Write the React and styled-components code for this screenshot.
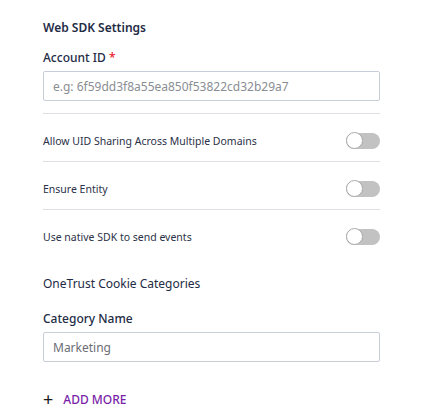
import React, { useState } from 'react'
import styled, { createGlobalStyle } from 'styled-components'

const GlobalStyle = createGlobalStyle`
  body {
    margin: 0;
    background: #ffffff;
    font-family: "Noto Sans", "Open Sans", sans-serif;
    color: #232b45;
  }
`

const toggles = [
  { id: 'uid', label: 'Allow UID Sharing Across Multiple Domains' },
  { id: 'entity', label: 'Ensure Entity' },
  { id: 'native', label: 'Use native SDK to send events' },
]

function App() {
  const [on, setOn] = useState({})
  const [accountId, setAccountId] = useState('')
  const [category, setCategory] = useState('Marketing')

  return (
    <Wrap>
      <GlobalStyle />
      <Title>Web SDK Settings</Title>

      <Label $top={10}>
        Account ID <Required>*</Required>
      </Label>
      <Input
        placeholder="e.g: 6f59dd3f8a55ea850f53822cd32b29a7"
        value={accountId}
        onChange={(e) => setAccountId(e.target.value)}
      />

      <Toggles>
        {toggles.map((t) => (
          <ToggleRow key={t.id}>
            <RowLabel>{t.label}</RowLabel>
            <Switch
              $on={!!on[t.id]}
              onClick={() => setOn({ ...on, [t.id]: !on[t.id] })}
            />
          </ToggleRow>
        ))}
      </Toggles>

      <SubTitle>OneTrust Cookie Categories</SubTitle>

      <Label $top={15}>Category Name</Label>
      <Input value={category} onChange={(e) => setCategory(e.target.value)} />

      <AddMore>
        <Plus>+</Plus>
        ADD MORE
      </AddMore>
    </Wrap>
  )
}

const Wrap = styled.div`
  width: 337px;
  padding: 18px 0 0 43px;
  display: flex;
  flex-direction: column;
`
const Title = styled.div`
  font-size: 12px;
  font-weight: 600;
  line-height: 20px;
`
const Label = styled.div`
  margin-top: ${(p) => p.$top}px;
  margin-bottom: 3px;
  font-size: 12px;
  font-weight: 500;
  line-height: 20px;
`
const Required = styled.span`
  color: #e8202a;
`
const Input = styled.input`
  box-sizing: border-box;
  width: 100%;
  height: 30px;
  padding: 0 9px;
  border: 1px solid #c8ced8;
  border-radius: 2px;
  font-family: "Noto Sans", sans-serif;
  font-size: 12px;
  color: #6b6e75;
  outline: none;
  &::placeholder {
    color: #8a8d93;
  }
`
const Toggles = styled.div`
  margin-top: 12px;
  border-top: 1px solid #dcdfe4;
`
const ToggleRow = styled.div`
  box-sizing: border-box;
  height: 47px;
  padding-top: 6px;
  display: flex;
  align-items: center;
  justify-content: space-between;
  & + & {
    height: 48px;
    border-top: 1px solid #dcdfe4;
  }
`
const RowLabel = styled.span`
  font-size: 10.5px;
  color: #2b3148;
`
const Switch = styled.button`
  position: relative;
  width: 34px;
  height: 16px;
  padding: 0;
  border: none;
  border-radius: 8px;
  background: ${(p) => (p.$on ? '#8e3bbd' : '#c2c2c2')};
  cursor: pointer;
  &::after {
    content: '';
    position: absolute;
    top: -0.5px;
    left: ${(p) => (p.$on ? '17px' : '0')};
    width: 15px;
    height: 15px;
    border-radius: 50%;
    background: #ffffff;
    border: 1px solid #a9a9a9;
  }
`
const SubTitle = styled.div`
  margin-top: 17px;
  font-size: 12px;
  line-height: 20px;
`
const AddMore = styled.button`
  align-self: flex-start;
  margin-top: 27px;
  height: 20px;
  padding: 0;
  border: none;
  background: none;
  display: flex;
  align-items: center;
  gap: 10px;
  font-family: "Noto Sans", sans-serif;
  font-size: 12px;
  font-weight: 500;
  color: #7a1fa8;
  cursor: pointer;
`
const Plus = styled.span`
  font-size: 18px;
  font-weight: 400;
  color: #1a1a1a;
  line-height: 1;
`

export default App
